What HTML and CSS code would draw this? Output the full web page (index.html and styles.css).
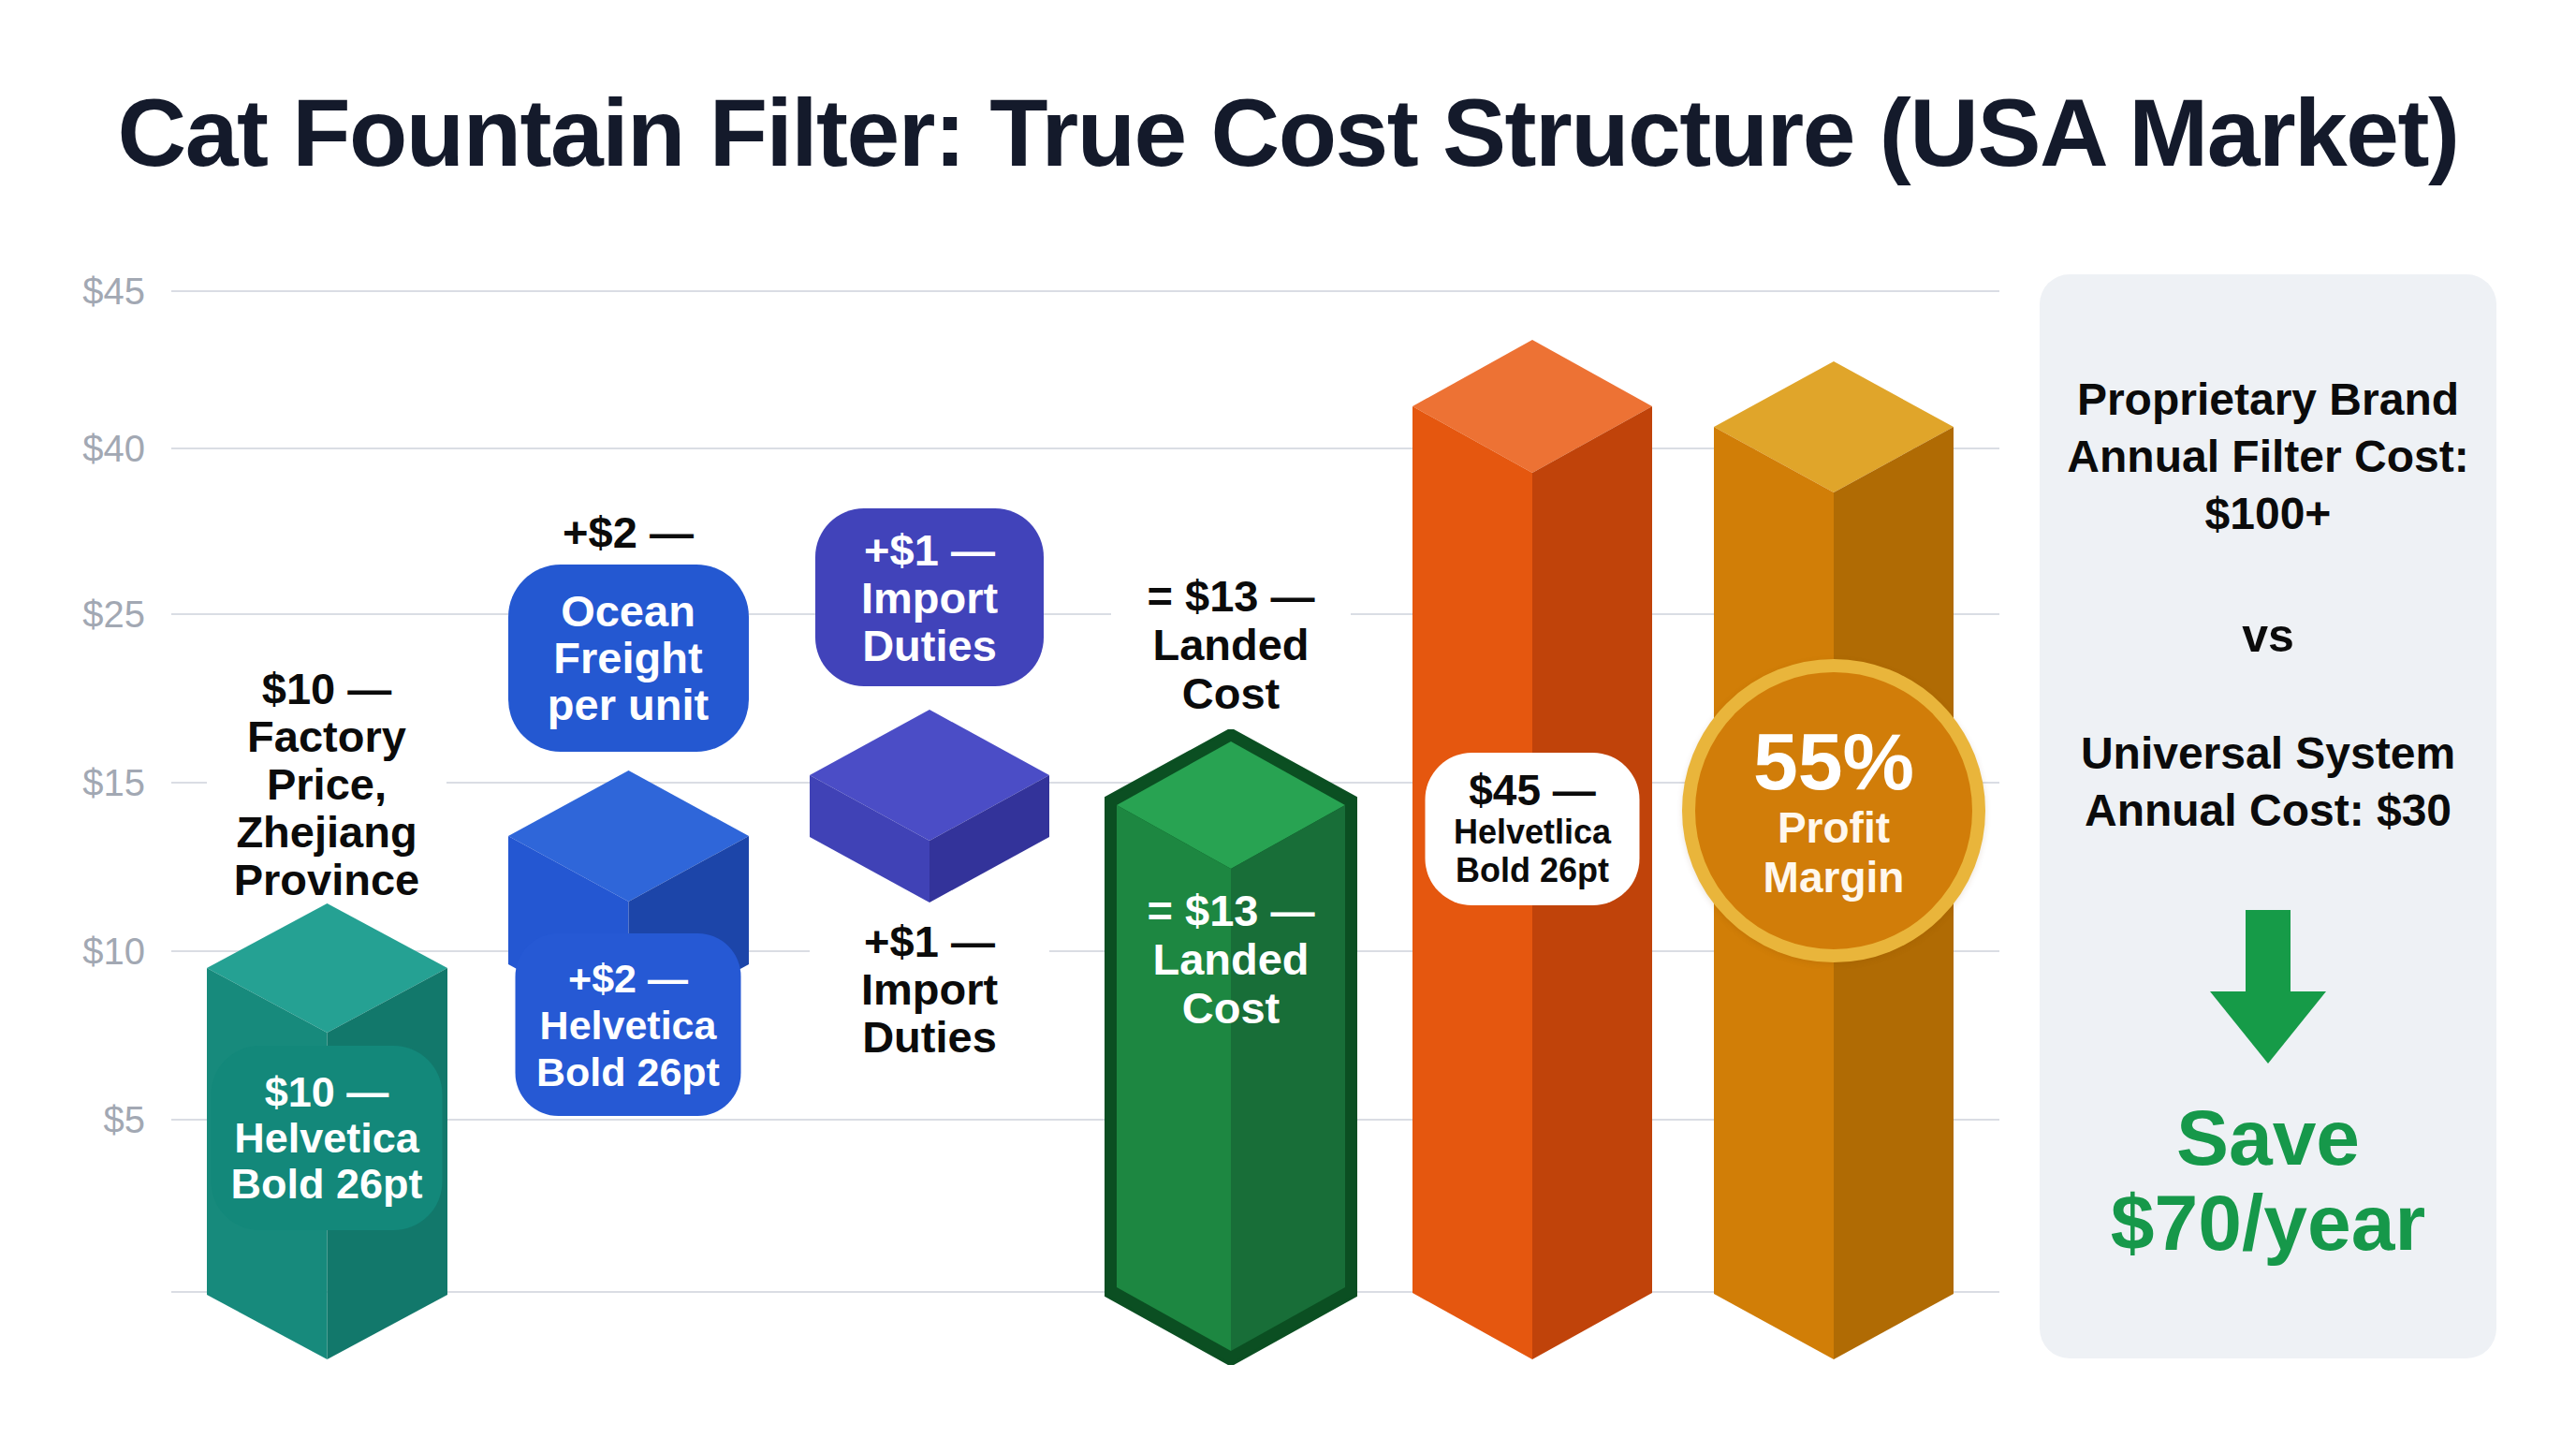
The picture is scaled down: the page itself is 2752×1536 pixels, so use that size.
FILE: index.html
```html
<!DOCTYPE html>
<html lang="en">
<head>
<meta charset="utf-8">
<title>Cat Fountain Filter: True Cost Structure (USA Market)</title>
<link rel="stylesheet" href="styles.css">
</head>
<body>
<main class="slide">
  <h1 class="title">Cat Fountain Filter: True Cost Structure (USA Market)</h1>
  <div class="content">
    <section class="chart">
      <div class="axis">
        <div class="tick"><span class="tick-label">$45</span><span class="tick-line"></span></div>
        <div class="tick"><span class="tick-label">$40</span><span class="tick-line"></span></div>
        <div class="tick"><span class="tick-label">$25</span><span class="tick-line"></span></div>
        <div class="tick"><span class="tick-label">$15</span><span class="tick-line"></span></div>
        <div class="tick"><span class="tick-label">$10</span><span class="tick-line"></span></div>
        <div class="tick"><span class="tick-label">$5</span><span class="tick-line"></span></div>
        <div class="tick"><span class="tick-label"></span><span class="tick-line"></span></div>
      </div>

      <div class="bars">
        <!-- 1: Factory price -->
        <div class="col" style="padding-top:417px">
          <div class="note">$10 —<br>Factory<br>Price,<br>Zhejiang<br>Province</div>
          <svg class="prism" width="257" height="487" viewBox="0 0 257 487">
            <polygon class="teal-top" points="0,69 128.5,0 257,69 128.5,138"/>
            <polygon class="teal-left" points="0,69 128.5,138 128.5,487 0,418"/>
            <polygon class="teal-right" points="128.5,138 257,69 257,418 128.5,487"/>
          </svg>
          <div class="tag tag-teal">$10 —<br>Helvetica<br>Bold 26pt</div>
        </div>

        <!-- 2: Ocean freight -->
        <div class="col" style="padding-top:250px">
          <div class="note note-tight">+$2 —</div>
          <div class="pill pill-blue">Ocean<br>Freight<br>per unit</div>
          <svg class="prism cube-blue" width="257" height="277" viewBox="0 0 257 277">
            <polygon class="blue-top" points="0,70 128.5,0 257,70 128.5,140"/>
            <polygon class="blue-left" points="0,70 128.5,140 128.5,277 0,207"/>
            <polygon class="blue-right" points="128.5,140 257,70 257,207 128.5,277"/>
          </svg>
          <div class="tag tag-blue">+$2 —<br>Helvetica<br>Bold 26pt</div>
        </div>

        <!-- 3: Import duties -->
        <div class="col" style="padding-top:250px">
          <div class="pill pill-purple">+$1 —<br>Import<br>Duties</div>
          <svg class="prism cube-purple" width="256" height="206" viewBox="0 0 256 206">
            <polygon class="purple-top" points="0,70 128,0 256,70 128,140"/>
            <polygon class="purple-left" points="0,70 128,140 128,206 0,136"/>
            <polygon class="purple-right" points="128,140 256,70 256,136 128,206"/>
          </svg>
          <div class="note note-below">+$1 —<br>Import<br>Duties</div>
        </div>

        <!-- 4: Landed cost -->
        <div class="col" style="padding-top:318px">
          <div class="note note-landed">= $13 —<br>Landed<br>Cost</div>
          <svg class="prism prism-green" width="270" height="679" viewBox="0 0 270 679">
            <polygon class="green-edge" points="0,74 135,0 270,74 270,604 135,679 0,604"/>
            <g transform="translate(13 13)">
              <polygon class="green-top" points="0,68 122,0 244,68 122,136"/>
              <polygon class="green-left" points="0,68 122,136 122,651 0,583"/>
              <polygon class="green-right" points="122,136 244,68 244,583 122,651"/>
            </g>
          </svg>
          <div class="inbar">= $13 —<br>Landed<br>Cost</div>
        </div>

        <!-- 5: Retail price -->
        <div class="col" style="padding-top:70px">
          <svg class="prism" width="256" height="1089" viewBox="0 0 256 1089">
            <polygon class="orange-top" points="0,71 128,0 256,71 128,142"/>
            <polygon class="orange-left" points="0,71 128,142 128,1089 0,1018"/>
            <polygon class="orange-right" points="128,142 256,71 256,1018 128,1089"/>
          </svg>
          <div class="tag tag-white"><span class="tag-big">$45 —</span><br>Helvetlica<br>Bold 26pt</div>
        </div>

        <!-- 6: Margin -->
        <div class="col" style="padding-top:93px">
          <svg class="prism" width="256" height="1066" viewBox="0 0 256 1066">
            <polygon class="amber-top" points="0,70 128,0 256,70 128,140"/>
            <polygon class="amber-left" points="0,70 128,140 128,1066 0,996"/>
            <polygon class="amber-right" points="128,140 256,70 256,996 128,1066"/>
          </svg>
          <div class="badge">
            <span class="badge-pct">55%</span>
            <span class="badge-txt">Profit</span>
            <span class="badge-txt">Margin</span>
          </div>
        </div>
      </div>
    </section>

    <aside class="panel">
      <p class="panel-text">Proprietary Brand<br>Annual Filter Cost:<br>$100+</p>
      <p class="panel-vs">vs</p>
      <p class="panel-text panel-second">Universal System<br>Annual Cost: $30</p>
      <svg class="arrow" width="124" height="164" viewBox="0 0 124 164">
        <rect x="38" y="0" width="48" height="88" fill="#169b48"/>
        <polygon points="0,87 124,87 62,164" fill="#169b48"/>
      </svg>
      <p class="save">Save<br>$70/year</p>
    </aside>
  </div>
</main>
</body>
</html>
```

FILE: styles.css
```css
* { box-sizing: border-box; }

html, body {
  margin: 0;
  padding: 0;
  background: #ffffff;
}

.slide {
  width: 2752px;
  height: 1536px;
  overflow: hidden;
  font-family: "Liberation Sans", Arial, Helvetica, sans-serif;
  background: #ffffff;
}

.title {
  margin: 0;
  padding-top: 82px;
  font-size: 102px;
  line-height: 120px;
  letter-spacing: -1.5px;
  font-weight: 700;
  text-align: center;
  color: #141a2b;
}

.content {
  display: flex;
  gap: 43px;
  margin-top: 91px;
  height: 1158px;
  padding-right: 85px;
}

/* ---------- chart ---------- */
.chart {
  position: relative;
  flex: 0 0 2136px;
  height: 100%;
}

.axis {
  display: grid;
  grid-template-rows: 168px 177px 180px 180px 180px 184px 0;
  padding-top: 18px;
}

.tick {
  display: flex;
  align-items: center;
  height: 0;
}

.tick-label {
  flex: 0 0 155px;
  text-align: right;
  font-size: 40px;
  line-height: 46px;
  color: #a2a8b3;
}

.tick-line {
  flex: 1;
  height: 2px;
  margin-left: 28px;
  background: #dadde4;
}

.bars {
  position: absolute;
  top: 0;
  left: 188px;
  display: grid;
  grid-template-columns: repeat(6, 322px);
}

.col {
  position: relative;
  display: flex;
  flex-direction: column;
  align-items: center;
}

.prism { display: block; flex: none; }

.note {
  width: 256px;
  background: #ffffff;
  color: #0b0b0b;
  font-size: 47px;
  line-height: 51px;
  font-weight: 700;
  text-align: center;
}

.note-tight { width: auto; padding: 0 10px; }
.note-below { margin-top: 16px; }
.note-landed { line-height: 52px; margin-bottom: 12px; }

.pill {
  display: flex;
  flex-direction: column;
  justify-content: center;
  color: #ffffff;
  font-size: 47px;
  line-height: 50px;
  font-weight: 700;
  text-align: center;
}

.pill-blue {
  width: 257px;
  height: 200px;
  margin-top: 9px;
  border-radius: 56px;
  background: #2458d1;
}

.pill-purple {
  width: 244px;
  height: 190px;
  border-radius: 52px;
  background: #4143ba;
  line-height: 51px;
}

.cube-blue { margin-top: 20px; }
.cube-purple { margin-top: 25px; }

/* overlays */
.tag,
.inbar,
.badge {
  position: absolute;
  left: 50%;
  transform: translateX(-50%);
  text-align: center;
  font-weight: 700;
}

.tag {
  display: flex;
  flex-direction: column;
  justify-content: center;
  color: #ffffff;
}

.tag-teal {
  top: 824px;
  width: 247px;
  height: 197px;
  border-radius: 52px;
  background: #13887a;
  font-size: 45px;
  line-height: 49px;
}

.tag-blue {
  top: 704px;
  width: 241px;
  height: 195px;
  border-radius: 46px;
  background: #2659d4;
  font-size: 43px;
  line-height: 50px;
}

.tag-white {
  top: 511px;
  width: 229px;
  height: 163px;
  border-radius: 50px;
  background: #ffffff;
  color: #0b0b0b;
  font-size: 36px;
  line-height: 41px;
  display: block;
  padding-top: 16px;
}

.tag-big {
  display: inline-block;
  font-size: 46px;
  line-height: 48px;
}

.inbar {
  top: 654px;
  width: 256px;
  color: #ffffff;
  font-size: 47px;
  line-height: 52px;
}

.badge {
  top: 411px;
  width: 324px;
  height: 324px;
  border-radius: 50%;
  border: 14px solid #e9b53b;
  background: #d17d09;
  display: flex;
  flex-direction: column;
  align-items: center;
  justify-content: center;
  color: #ffffff;
  box-shadow: 0 2px 6px rgba(120, 70, 0, 0.15);
}

.badge-pct {
  font-size: 86px;
  line-height: 90px;
}

.badge-txt {
  font-size: 46px;
  line-height: 53px;
  color: #fff8ee;
}

/* face colours */
.teal-top { fill: #25a193; }
.teal-left { fill: #178a7c; }
.teal-right { fill: #12786b; }

.blue-top { fill: #2f66d9; }
.blue-left { fill: #2457d2; }
.blue-right { fill: #1c45a9; }

.purple-top { fill: #4b4dc6; }
.purple-left { fill: #4042b6; }
.purple-right { fill: #33339a; }

.green-edge { fill: #0b4f22; stroke: #0b4f22; stroke-width: 3; stroke-linejoin: round; }
.green-top { fill: #28a352; }
.green-left { fill: #1d8741; }
.green-right { fill: #186e38; }

.orange-top { fill: #ed7234; }
.orange-left { fill: #e5570f; }
.orange-right { fill: #c0430a; }

.amber-top { fill: #e0a52a; }
.amber-left { fill: #d17e07; }
.amber-right { fill: #b06b04; }

/* ---------- side panel ---------- */
.panel {
  flex: 0 0 488px;
  height: 100%;
  border-radius: 32px;
  background: #eef1f5;
  display: flex;
  flex-direction: column;
  align-items: center;
  padding-top: 103px;
  text-align: center;
}

.panel p { margin: 0; }

.panel-text {
  font-size: 48px;
  line-height: 61px;
  font-weight: 700;
  color: #0b0b0b;
}

.panel-vs {
  margin-top: 70px !important;
  font-size: 50px;
  line-height: 61px;
  font-weight: 700;
  color: #0b0b0b;
}

.panel-second { margin-top: 64px !important; }

.arrow {
  display: block;
  margin-top: 76px;
}

.save {
  margin-top: 34px !important;
  font-size: 84px;
  line-height: 91px;
  font-weight: 700;
  color: #16984a;
}
```
